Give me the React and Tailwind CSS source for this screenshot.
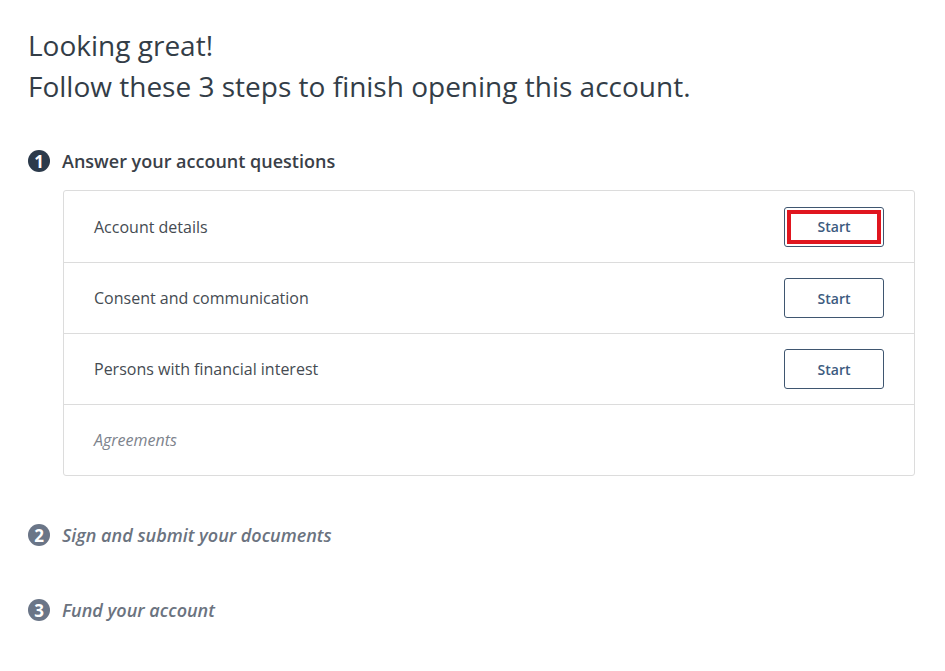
import React from 'react';

const font = { fontFamily: '"Open Sans", "Noto Sans", sans-serif' };

const StepBadge = ({ n, active }) => (
  <span
    className={`flex items-center justify-center w-[22px] h-[22px] rounded-full text-white text-[17px] font-bold leading-none ${
      active ? 'bg-[#2c3a4b]' : 'bg-[#6a7587]'
    }`}
  >
    {n}
  </span>
);

const rows = [
  { label: 'Account details', action: true, highlight: true },
  { label: 'Consent and communication', action: true },
  { label: 'Persons with financial interest', action: true },
  { label: 'Agreements', action: false },
];

const App = () => {
  return (
    <div className="min-h-screen bg-white pl-[28px] pr-[30px] pt-[25px]" style={font}>
      <h1 className="text-[28px] leading-[41px] text-[#333d47] font-normal">
        Looking great!
        <br />
        Follow these 3 steps to finish opening this account.
      </h1>

      <div className="mt-[43px] flex items-center gap-[12px] h-[22px]">
        <StepBadge n="1" active />
        <span className="text-[18px] font-semibold text-[#3a4048]">Answer your account questions</span>
      </div>

      <div className="ml-[35px] mt-[18px] border border-[#dcdcdc] rounded-[3px]">
        {rows.map((r, i) => (
          <div
            key={r.label}
            className={`flex items-center justify-between h-[71px] pl-[30px] pr-[30px] ${
              i > 0 ? 'border-t border-[#dcdcdc]' : ''
            }`}
          >
            <span
              className={`text-[16px] ${
                r.action ? 'text-[#454b52]' : 'italic text-[#7d838c]'
              }`}
            >
              {r.label}
            </span>
            {r.action && (
              <button className="relative w-[100px] h-[40px] border border-[#3f5670] rounded-[3px] bg-white text-[14px] font-semibold text-[#3d5b80]">
                {r.highlight && (
                  <span className="absolute left-[2px] right-[2px] top-[2px] bottom-[2px] border-[4px] border-[#e0161f]" />
                )}
                <span className="relative">Start</span>
              </button>
            )}
          </div>
        ))}
      </div>

      <div className="mt-[48px] flex items-center gap-[12px] h-[22px]">
        <StepBadge n="2" />
        <span className="text-[18px] font-semibold italic text-[#6b7380]">Sign and submit your documents</span>
      </div>

      <div className="mt-[53px] flex items-center gap-[12px] h-[22px]">
        <StepBadge n="3" />
        <span className="text-[18px] font-semibold italic text-[#6b7380]">Fund your account</span>
      </div>
    </div>
  );
};

export default App;
